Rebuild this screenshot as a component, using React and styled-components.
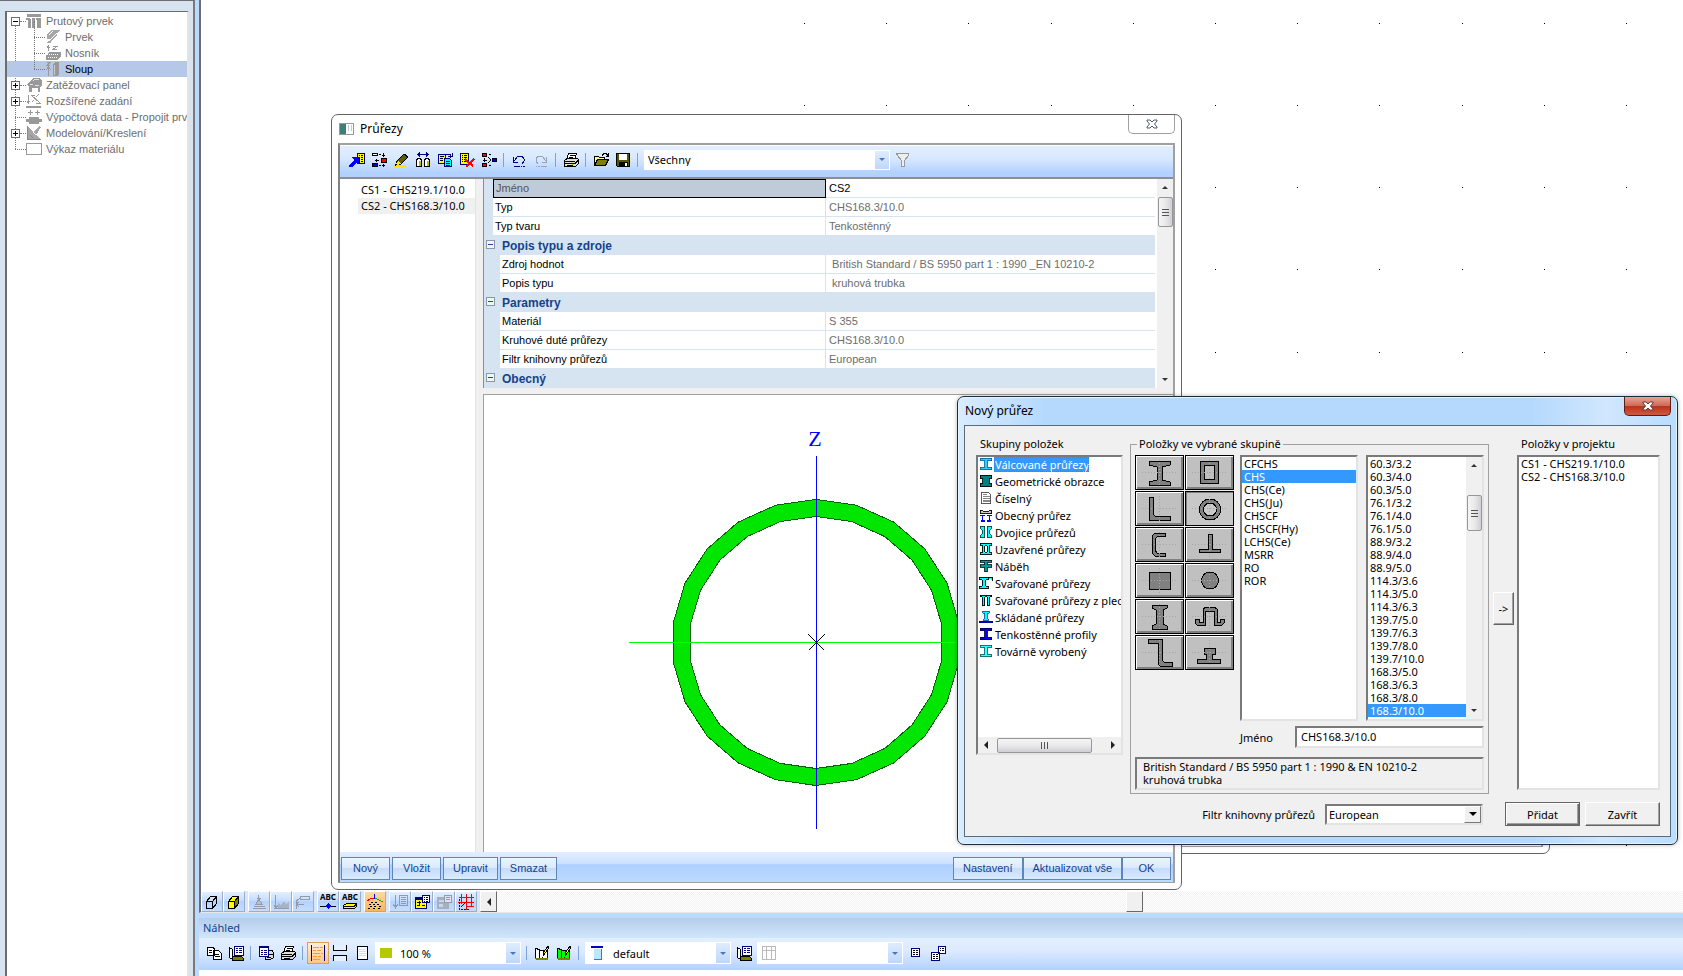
import React, { useState } from 'react'
import styled, { createGlobalStyle } from 'styled-components';

const uiFont = '"Noto Sans", "Open Sans", sans-serif';
const gridFont = '"Liberation Sans", Arial, sans-serif';

/* -------------------ICONS------------------------ */
const ICONS = {
  insert: <>
    <path d="M8.5 1.5h7v10h-7z" fill="#ff0" stroke="#000080" />
    <path d="M10 3.5h1m1 0h2M10 5.5h1m1 0h2M10 7.5h1m1 0h2M10 9.5h1m1 0h2" stroke="#000" />
    <path d="M3 5h7v7l-2-2-5 5H0v-2l5-5z" fill="#00f" />
    <path d="M10 5v7M5 10l-5 5" stroke="#000080" fill="none" />
  </>,
  split: <>
    <path d="M1.500 1.500h5v2h-5z" fill="#fff" stroke="#000" />
    <path d="M10 6h6v5h-6z" fill="#000" /><path d="M11 7h4v3h-4z" fill="#f00" />
    <path d="M1 11h6v4H1z" fill="#000" /><path d="M2 12h4v2H2z" fill="#00c" />
    <path d="M8 2.500h2M12.500 1v4M11 3.500h3M4 8.500h4M5.500 7v3M12.500 12v3M11 13.500h3M8 13.500h2" stroke="#000" fill="none" />
  </>,
  pencil: <>
    <path d="M2 13h11v2H1z" fill="#ffe600" />
    <path d="M11 2l4 3-7 7-5 1 1-4z" fill="#5c5c00" stroke="#000" />
    <path d="M5 9l3 3-4 1H2z" fill="#ffe600" /><path d="M1 13l2-2 1 2z" fill="#000" />
  </>,
  compare: <>
    <path d="M2 2.500h12M4.500 0v5M3.500 1v3M11.500 0v5M12.500 1v3" stroke="#000080" />
    <path d="M1.500 8.500l1-2h3l1 2v6h-5zM9.500 8.500l1-2h3l1 2v6h-5z" fill="#fff" stroke="#000" />
    <path d="M4 9h2v5H4zM12 9h2v5h-2z" fill="#bdbd00" />
  </>,
  copyDocs: <>
    <path d="M1.500 2.500h7v9h-7z" fill="#ff0" stroke="#000080" />
    <path d="M3 4.500h4M3 6.500h3M3 8.500h3" stroke="#000" />
    <path d="M7.500 6.500h5l2 2v6h-7z" fill="#0ff" stroke="#000080" />
    <path d="M9 9.500h4M9 11.500h4M9 13h4" stroke="#000080" />
    <path d="M9 2.500h4v3M11 4h4M15 1v4" stroke="#000080" fill="none" />
  </>,
  removeDoc: <>
    <path d="M1.500 1.500h8v11h-8z" fill="#ff0" stroke="#000080" />
    <path d="M3 3.500h1m1 0h3M3 5.500h1m1 0h3M3 7.500h1m1 0h3M3 9.500h1m1 0h3" stroke="#000" />
    <path d="M6 7l8 7M15 7l-8 8" stroke="#f00" strokeWidth="2" />
  </>,
  merge: <>
    <path d="M1 1h5v4H1zM1 11h5v4H1z" fill="#000" /><path d="M2 2h3v2H2zM2 12h3v2H2z" fill="#f00" />
    <path d="M11 6h5v4h-5z" fill="#000" /><path d="M12 7h3v2h-3z" fill="#00f" />
    <path d="M8 2.500h2M3.500 6v4M2 8.500h4M8 13.500h2M7 5l3 3-3 3" stroke="#000" fill="none" />
  </>,
  undo: <path d="M3 14.500h6m1 0h1m1 0h2M2 10.500h5M2.500 5v5M3 9l4-5h4l2 3v2l-2 3" stroke="#000080" fill="none" />,
  redo: <path d="M3 14.500h1m1 0h2m1 0h6M9 10.500h5M13.500 5v5M13 9L9 4H5L3 7v2l2 3" stroke="#9aa3b0" fill="none" />,
  print: <>
    <path d="M5.500 1.500h8l-2 6h-8z" fill="#fff" stroke="#000" />
    <path d="M7 3.500h5M6 5.500h4" stroke="#000" />
    <path d="M1.500 8.500l3-2h10l1 1v4l-3 3h-11z" fill="#ddd" stroke="#000" />
    <path d="M2 9.500h10M2 11.500h10l3-3M4 13.500h6" stroke="#000" fill="none" />
    <path d="M9 12h2v1H9z" fill="#cc0" />
  </>,
  open: <>
    <path d="M1.500 13.500v-9h4l1 1h5v3" fill="#ffff80" stroke="#000" />
    <path d="M1.500 13.500l3-6h11l-3 6z" fill="#808000" stroke="#000" />
    <path d="M9 3.500l2-2h2l2 2M15.500 1v3h-3" stroke="#000" fill="none" />
  </>,
  save: <>
    <path d="M1.500 1.500h13v13h-12l-1-1z" fill="#555500" stroke="#000" />
    <path d="M4 2h8v6H4z" fill="#fff" /><path d="M4 10h9v5H4z" fill="#000" /><path d="M10 11h2v3h-2z" fill="#fff" />
  </>,
  filter: <path d="M1.500 1.500h12v2l-4 5v6h-3v-6l-4-5z" stroke="#999" fill="#eee" />,
  box: <path d="M2.500 7.500h6v7h-6zM2.500 7.500l4-5h6v7l-4 5M8.500 7.500l4-5" stroke="#000" fill="none" />,
  boxYellow: <>
    <path d="M2.500 7.500l4-5h6v7l-4 5h-6z" fill="#ff0" stroke="#000" />
    <path d="M8 8l4-5v6l-4 5z" fill="#808000" /><path d="M2 7.500h6.500v7M8.500 7.500l4-5" stroke="#000" fill="none" />
  </>,
  support: <path d="M7.500 1v4M6 4h4M8 5l-3 5h6zM3 12.500h11M2 14.500h13" stroke="#919baa" fill="#b4bdca" />,
  loads: <>
    <path d="M2.500 1v13M1 11l2 3 2-3" stroke="#919baa" fill="none" />
    <path d="M5 14V9l3 2 3-4 2 3 3-3v7z" fill="#a9b3c1" /><path d="M1 14.500h15" stroke="#919baa" />
  </>,
  label: <path d="M5.500 2.500h9v3h-9zM5 4L1.500 7v8M1 10.500h8M4 8l-3 2 3 3" stroke="#919baa" fill="none" />,
  nodeAbc: <><path d="M0 12.500h16" stroke="#000" /><path d="M5 12l3-3 3 3-3 3z" fill="#00f" /></>,
  beamAbc: <><path d="M1.500 11.500l3-2h10v3l-2 2h-11z" fill="#ff0" stroke="#000" /><path d="M2 12.500h10l3-3" stroke="#000" fill="none" /></>,
  terrain: <>
    <path d="M1 10l7-5 7 5-7 5z" fill="#f7c877" />
    <path d="M2 10.500h2m2 0h2m2 0h2M4 8.500h2m2 0h2M3 12.500h2m2 0h2m3 0h2M1 14.500h2m3 0h2m3 0h2" stroke="#000" />
    <path d="M0 7l5-3 3 0" stroke="#f00" fill="none" /><path d="M8 4l8 4" stroke="#0b0" /><path d="M7.500 0v5" stroke="#00f" />
  </>,
  listDown: <path d="M3.500 1v12M1 10l2.500 4L6 10M7.500 1.500h8v10h-8zM9 3.500h5M9 5.500h5M9 7.500h5M9 9.500h5" stroke="#919baa" fill="none" />,
  cascade: <>
    <path d="M1 3h12v12H1z" fill="#000080" /><path d="M2 6h10v8H2z" fill="#ff0" />
    <path d="M3 8.500h4M5.500 7v5M3 11.500h3M8 11.500h3" stroke="#000" />
    <path d="M8.500 1.500h7v7h-7z" fill="#fff" stroke="#000080" />
    <path d="M10 3.500h1m1 0h2M10 5.500h1m1 0h2M10 7h1m1 0h2" stroke="#000" />
  </>,
  cascadeOff: <>
    <path d="M1 3h12v12H1z" fill="#a5afbd" /><path d="M3 6h8v2H3zM3 10h4v3H3z" fill="#c8d6e8" />
    <path d="M8.500 1.500h7v7h-7z" fill="#dbe6f5" stroke="#919baa" /><path d="M10 3.500h4M10 5.500h4" stroke="#919baa" />
  </>,
  gridRed: <>
    <path d="M1 3.500h15M0 8.500h16M3.500 0v10M8.500 0v16M13.500 0v13M8 12.500h8" stroke="#f00" />
    <path d="M1 15l8-8M1 5v10h11" stroke="#00f" strokeDasharray="2 1" fill="none" />
  </>,
  copy: <path d="M1.500 2.500h6l1 2v6h-7zM7.500 5.500h5l3 3v6h-8zM3 5.500h3M3 7.500h3M9 9.500h4M9 11.500h5" stroke="#000" fill="#fff" />,
  book: <>
    <path d="M1.500 2.500l3 2v10l-3-2z" fill="#fff" stroke="#000" /><path d="M4.500 11.500h9l2 2v2h-11z" fill="#808000" stroke="#000" />
    <path d="M6.500 1.500h9v9h-9z" fill="#fff" stroke="#000080" />
    <path d="M8 3.500h2m1 0h3M8 5.500h2m1 0h3M8 7.500h2m1 0h3" stroke="#000080" />
  </>,
  printTable: <>
    <path d="M7.500 5.500h7l1 3v4l-3 2h-5z" fill="#ddd" stroke="#000" /><path d="M9 9.500h6M9 12h4" stroke="#000" />
    <path d="M1.500 1.500h9v10h-9z" fill="#fff" stroke="#000080" />
    <path d="M1 2.500h10M3 5.500h2m1 0h3M3 7.500h2m1 0h3M3 9.500h2m1 0h3" stroke="#000080" />
  </>,
  pageMargins: <>
    <path d="M1.500 0v16M14.500 0v16" stroke="#000080" />
    <path d="M3 2.500h6m1 0h3M3 5.500h3m1 0h4M3 8.500h7m1 0h2M3 11.500h4m1 0h3M3 14h7" stroke="#ff9a2e" />
  </>,
  pageSplit: <path d="M1.500 0v5.500h13V0M1.500 16v-5.500h13V16" stroke="#000" fill="#e6f1ff" />,
  page: <><path d="M3.500 1.500h10v13h-10z" fill="#fff" stroke="#000" /><path d="M5 4.500h7M5 6.500h7M5 8.500h7M5 10.500h7" stroke="#cfe0f5" /></>,
  bookEdit: <>
    <path d="M1.500 3.500l4 1v10l-4-1zM5.500 14.500V5.500h8v8z" fill="#fff" stroke="#000" />
    <path d="M1 13h13v2H2z" fill="#808000" /><path d="M14 1l-5 7v3l6-8z" fill="#ff0" stroke="#000" />
  </>,
  bookEditGreen: <>
    <path d="M1.500 3.500l4 1v10l-4-1zM5.500 14.500V5.500h8v8z" fill="#0f0" stroke="#000" />
    <path d="M1 13h13v2H2z" fill="#808000" /><path d="M14 1l-5 7v3l6-8z" fill="#ff0" stroke="#000" />
  </>,
  column: <><path d="M2 1h12v2H2z" fill="#00c" /><path d="M5 4h8v11H5z" fill="#bfe6ff" /><path d="M12.500 4v11M5 14.500h8" stroke="#08f" /></>,
  table: <path d="M1.500 1.500h13v13h-13zM1 5.500h14M5.500 2v13M10.500 2v13" stroke="#bbb" fill="none" />,
  sheet: <><path d="M3.500 3.500h8v8h-8z" fill="#fff" stroke="#000080" /><path d="M5 5.500h2m1 0h2M5 7.500h2m1 0h2M5 9.500h2m1 0h2" stroke="#000" /></>,
  sheets: <>
    <path d="M8.500 1.500h7v7h-7zM1.500 7.500h8v8h-8z" fill="#fff" stroke="#000080" />
    <path d="M10 3.500h1m1 0h2M10 5.500h1m1 0h2M3 9.500h2m1 0h2M3 11.500h2m1 0h2M3 13.500h2m1 0h2" stroke="#000" />
  </>,
  // tree
  frame: <path d="M1 1h14v3H1zM0 5h4v2H0zM2 6h3v9H2zM6 6h3v9H6zM11 6h4v9h-4zM6 5h3v2H6zM10 5h5v2h-5z" fill="#999" />,
  member: <><path d="M2 5l4-4h9l-3 3v3l-7 7H2l3-4H2z" fill="#a6a6a6" /><path d="M4 12l8-8M6 13l8-8M4 6l4-4" stroke="#fff" /></>,
  beam: <><path d="M1 10l3-3h12v4l-3 4H1z" fill="#999" /><path d="M2 9.500h11M3 12.500h10" stroke="#fff" strokeDasharray="1 1" /><path d="M3.500 1v5M2 3l1.500-2L5 3M8 1.500h4l-4 3h4" stroke="#999" fill="none" /></>,
  post: <><path d="M8 3l2-2h4v12l-2 2H8z" fill="#999" /><path d="M9.500 4v10" stroke="#ccc" /><path d="M3.500 7v8M1 9l2.500-3L6 9M2 1.500h3l-3 3h3" stroke="#999" fill="none" /></>,
  panel: <><path d="M0 8l5-4 2-3h7l2 3v4l-2 3v4h-2v-4H6v4H3V9z" fill="#999" /><path d="M7 4l2-2h4M9 8h4M4 7h3" stroke="#e5e5e5" fill="none" /></>,
  extended: <path d="M2.500 2v8M1 8l1.500 2L4 8M5 2l9 8M6 9l2-2M10 4l3-3M6 2h3M10 10h5M0 13.500h15M0 14.500h15" stroke="#999" fill="none" />,
  calc: <><path d="M0 10h16v3H0zM3 8h10v7H3z" fill="#999" /><path d="M4.500 1v5M2 3.500h5M11.500 1v5M9 3.500h5" stroke="#999" /></>,
  modelling: <><path d="M2 2v12h12zM7 8l6-7 2 1-5 8z" fill="#a6a6a6" /><path d="M1.500 1v13M1 14.500h14M4 10l3 3" stroke="#888" /></>,
  sheetOff: <path d="M.5 2.500h15v11H.5z" stroke="#999" fill="#fff" />,
  window: <><path d="M.5 2.500h14v11H.5z" fill="#fff" stroke="#999" /><path d="M1 3h6v10H1z" fill="#3c8077" /><path d="M9 4h1v6H9zM12 4h1v6h-1z" fill="#b5cde5" /></>,
  // section groups
  rolled: <path d="M1.500 1.500h13v3h-5v7h5v3h-13v-3h5v-7h-5z" fill="#3cf" stroke="#0a6a9a" />,
  geometric: <path d="M1.500 1.500h13v4h-3v5h3v4h-13v-4h3v-5h-3z" fill="#008080" stroke="#000" />,
  numeric: <><path d="M2.500 1.500h8l3 3v10h-11z" fill="#fff" stroke="#444" /><path d="M4 4.500h5M4 6.500h8M4 8.500h8M4 10.500h8M4 12.500h8" stroke="#777" /></>,
  general: <><path d="M1.500 2.500h2l2 2h5l2-2h2v4h-13z" fill="#ccc" stroke="#000" /><path d="M1 8.500h6M9 8.500h6M4 9v5M12 9v5M2 14.500h5M9 14.500h5" stroke="#00f" strokeWidth="2" /></>,
  pair: <path d="M1.500 1.500h5v13h-5v-2l2-2v-5l-2-2zM14.500 1.500h-5v13h5v-2l-2-2v-5l2-2z" fill="#0ff" stroke="#044" />,
  closed: <path d="M1.500 1.500h13v2h-2v9h2v2h-13v-2h2v-9h-2zM6.500 4.500v7h3v-7z" fillRule="evenodd" fill="#0ff" stroke="#000" />,
  haunch: <path d="M1.500 1.500h13v2h-5v3h5v3h-5v5h-3v-5h-5v-3h5v-3h-5z" fill="#009999" stroke="#022" />,
  welded: <path d="M.5 1.500h10v3h-3v7h3v3H.5v-3h3v-7h-3zM10 1.500h5.500v4" fill="#0ff" stroke="#000" />,
  plates: <path d="M1.500 2.500h13v2h-2v10h-3v-10h-3v10h-3v-10h-2z" fill="#0ff" stroke="#000" />,
  built: <><path d="M4.500 1.500h7v2h-2v6l2 2h-7l2-2v-6h-2z" fill="#0ff" stroke="#0057a8" /><path d="M0 13h16v2H0z" fill="#0000a0" /></>,
  thin: <path d="M1.500 1.500h13v3h-5v7h5v3h-13v-3h5v-7h-5z" fill="#00f" stroke="#000050" />,
  factory: <path d="M1.500 1.500h13v2l-5 1v7l5 1v2h-13v-2l5-1v-7l-5-1z" fill="#3ff" stroke="#066" />,
};

const Icon = ({ name, size = 16 }) => (
  <IconSvg width={size} height={size} viewBox="0 0 16 16" aria-hidden="true">{ICONS[name]}</IconSvg>
);

const SHAPES = [
  ['I', <path d="M14 6h21v4l-8 2v13l8 2v3H14v-3l8-2V12l-8-2z" />],
  ['Obdelnik', <path fillRule="evenodd" d="M15 6h18v22H15zM19 10v14h10V10z" />],
  ['L', <path d="M14 6h4v17l2 2h15v4H14z" />],
  ['Kruh', <path fillRule="evenodd" d="M25 8a10.500 10.500 0 1 0 .01 0zM25 12a6.500 6.500 0 1 1-.01 0z" />],
  ['U', <path d="M30 6v3h-7l-3 3v11l2 3h8v3H20l-3-3V9l3-3z" />],
  ['T', <path d="M23 7h4v15h8v3H14v-3h9z" />],
  ['Deska', <path d="M14 9h21v17H14z" />],
  ['Tyc', <path d="M25 9a8.500 8.500 0 1 0 .01 0z" />],
  ['I2', <path d="M17 6h15v3l-4 2v14l4 2v3H17v-3l4-2V11l-4-2z" />],
  ['Omega', <path d="M10 20h4v3h4V10l3-2h8l3 2v13h3v-3h4v4l-2 2h-8V12h-9v14h-8l-2-2z" />],
  ['Z', <path d="M13 4h14v21l2 2h8v4H25l-2-3V8H13z" />],
  ['Kolejnice', <path d="M19 13h11v6h-3v5h8v4H12v-4h9v-5h-2z" />],
];

const TREE = [
  { text: 'Prutový prvek', icon: 'frame', sign: '-' },
  { text: 'Prvek', icon: 'member', child: true },
  { text: 'Nosník', icon: 'beam', child: true },
  { text: 'Sloup', icon: 'post', child: true, active: true },
  { text: 'Zatěžovací panel', icon: 'panel', sign: '+' },
  { text: 'Rozšířené zadání', icon: 'extended', sign: '+' },
  { text: 'Výpočtová data - Propojit prv', icon: 'calc' },
  { text: 'Modelování/Kreslení', icon: 'modelling', sign: '+' },
  { text: 'Výkaz materiálu', icon: 'sheetOff' },
];

const GROUPS = [
  ['Válcované průřezy', 'rolled'], ['Geometrické obrazce', 'geometric'], ['Číselný', 'numeric'],
  ['Obecný průřez', 'general'], ['Dvojice průřezů', 'pair'], ['Uzavřené průřezy', 'closed'],
  ['Náběh', 'haunch'], ['Svařované průřezy', 'welded'], ['Svařované průřezy z plec', 'plates'],
  ['Skládané průřezy', 'built'], ['Tenkostěnné profily', 'thin'], ['Továrně vyrobený', 'factory'],
];

const PROFILES = ['CFCHS', 'CHS', 'CHS(Ce)', 'CHS(Ju)', 'CHSCF', 'CHSCF(Hy)', 'LCHS(Ce)', 'MSRR', 'RO', 'ROR'];
const SIZES = ['60.3/3.2', '60.3/4.0', '60.3/5.0', '76.1/3.2', '76.1/4.0', '76.1/5.0', '88.9/3.2', '88.9/4.0', '88.9/5.0',
  '114.3/3.6', '114.3/5.0', '114.3/6.3', '139.7/5.0', '139.7/6.3', '139.7/8.0', '139.7/10.0', '168.3/5.0', '168.3/6.3', '168.3/8.0', '168.3/10.0'];
const PROJECT = ['CS1 - CHS219.1/10.0', 'CS2 - CHS168.3/10.0'];

const PROPS = [
  { name: 'Jméno', value: 'CS2', top: true, active: true },
  { name: 'Typ', value: 'CHS168.3/10.0', top: true },
  { name: 'Typ tvaru', value: 'Tenkostěnný', top: true },
  { group: 'Popis typu a zdroje' },
  { name: 'Zdroj hodnot', value: ' British Standard / BS 5950 part 1 : 1990 _EN 10210-2' },
  { name: 'Popis typu', value: ' kruhová trubka' },
  { group: 'Parametry' },
  { name: 'Materiál', value: 'S 355' },
  { name: 'Kruhové duté průřezy', value: 'CHS168.3/10.0' },
  { name: 'Filtr knihovny průřezů', value: 'European' },
  { group: 'Obecný' },
];

const MAIN_TOOLS = ['insert', 'split', 'pencil', 'compare', 'copyDocs', 'removeDoc', 'merge', '|', 'undo', 'redo', '|', 'print', '|', 'open', 'save', '|'];
const VIEW_TOOLS = [['box', 'boxYellow'], ['support', 'loads', 'label'], ['nodeAbc', 'beamAbc'], ['terrain'], ['listDown', 'cascade', 'cascadeOff', 'gridRed']];

// 22-sided ring, a little wider than tall
const ring = (rx, ry) => Array.from({ length: 22 }, (_, i) => {
  const a = (i * 2 * Math.PI) / 22;
  return `${(332 + rx * Math.sin(a)).toFixed(1)} ${(247.5 - ry * Math.cos(a)).toFixed(1)}`;
}).join('L');

const Tools = ({ items }) => items.map((name, i) => (
  name === '|' ? <Separator key={i} /> : <ToolButton key={i} aria-label={name}><Icon name={name} /></ToolButton>
));

const ListBox = ({ items, label, selected, onSelect }) => (
  <Items role="listbox" aria-label={label}>
    {items.map((item) => (
      <Item key={item} role="option" aria-selected={item === selected} $active={item === selected} onClick={() => onSelect && onSelect(item)}>{item}</Item>
    ))}
  </Items>
);

const ScrollBar = ({ before, thumb }) => (
  <Scroll>
    <Arrow $dir="up" />
    <Thumb style={{ marginTop: before, height: thumb }}><i /><i /><i /></Thumb>
    <Arrow $dir="down" $last />
  </Scroll>
);

const CloseGlyph = ({ dark }) => (
  <svg width="12" height="10" viewBox="0 0 12 10" aria-hidden="true">
    <path d="M1 1h3l2 2 2-2h3v1L8.500 5 11 8v1H8L6 7 4 9H1V8l2.500-3L1 2z" fill="#fff" stroke={dark ? '#555a70' : '#5c3a3a'} />
  </svg>
);

/* -------------------SIDEBAR------------------------ */
const Sidebar = () => (
  <Aside>
    <Tree>
      {TREE.map(({ text, icon, sign, child, active }) => (
        <TreeRow key={text} $child={child} $active={active}>
          {sign && <Toggle aria-label={text} $plus={sign === '+'} />}
          {!sign && !child && <NoToggle />}
          <Dash $long={!sign} />
          <Icon name={icon} />
          <span>{text}</span>
        </TreeRow>
      ))}
    </Tree>
  </Aside>
);

/* -------------------PRUREZY------------------------ */
const SectionsWindow = () => (
  <Window $x={130} $y={114} $w={851} $h={776}>
    <WindowTitle>
      <Icon name="window" />
      <h2>Průřezy</h2>
      <CloseFlat aria-label="Zavřít okno"><CloseGlyph dark /></CloseFlat>
    </WindowTitle>
    <WindowClient>
      <Toolbar>
        <Tools items={MAIN_TOOLS} />
        <Combo $w={246} $h={20}>
          <select aria-label="Filtr"><option>Všechny</option></select>
          <ComboArrow />
        </Combo>
        <ToolButton aria-label="filter"><Icon name="filter" /></ToolButton>
      </Toolbar>
      <WindowBody>
        <SectionList>
          {PROJECT.map((item, i) => <SectionItem key={item} $active={i === 1}>{item}</SectionItem>)}
        </SectionList>
        <Detail>
          <GridWrap>
            <PropTable>
              <colgroup><col style={{ width: 9 }} /><col style={{ width: 7 }} /><col style={{ width: 326 }} /><col /></colgroup>
              <tbody>
                {PROPS.map((p) => (
                  p.group ? (
                    <tr key={p.group}>
                      <Gutter colSpan={2}><GroupToggle aria-label={p.group} /></Gutter>
                      <GroupName colSpan={2}>{p.group}</GroupName>
                    </tr>
                  ) : (
                    <tr key={p.name}>
                      <Gutter colSpan={p.top ? 1 : 2} />
                      <PropName colSpan={p.top ? 2 : 1} $active={p.active}>{p.name}</PropName>
                      <PropValue $active={p.active}>{p.value}</PropValue>
                    </tr>
                  )
                ))}
              </tbody>
            </PropTable>
            <ScrollBar before={8} thumb={30} />
          </GridWrap>
          <Preview>
            <svg width="100%" height="100%" aria-label="CHS168.3/10.0">
              <path d={`M${ring(144, 143)}ZM${ring(127, 126)}Z`} fillRule="evenodd" fill="#00e600" stroke="#006400" />
              <path d="M145 247.5H690" stroke="#00ff00" />
              <path d="M332.500 61v373" stroke="#0000ff" />
              <path d="M324.500 239.500l16 16M340.500 239.500l-16 16" stroke="#000" />
              <text x="331" y="51" textAnchor="middle" fontFamily="Liberation Serif, serif" fontSize="22" fill="#0000ff">Z</text>
            </svg>
          </Preview>
        </Detail>
      </WindowBody>
      <Footer>
        <div>
          {['Nový', 'Vložit', 'Upravit', 'Smazat'].map((t) => <BlueButton key={t}>{t}</BlueButton>)}
        </div>
        <div>
          {['Nastavení', 'Aktualizovat vše', 'OK'].map((t) => <BlueButton key={t} $joined>{t}</BlueButton>)}
        </div>
      </Footer>
    </WindowClient>
  </Window>
);

/* -------------------NOVY PRUREZ------------------------ */
const NewSectionDialog = () => {
  const [group, setGroup] = useState('Válcované průřezy');
  const [shape, setShape] = useState('Kruh');
  const [profile, setProfile] = useState('CHS');
  const [size, setSize] = useState('168.3/10.0');
  const [name, setName] = useState('CHS168.3/10.0');

  return (
    <Dialog>
      <DialogTitle>
        <h2>Nový průřez</h2>
        <CloseRed aria-label="Zavřít dialog"><CloseGlyph /></CloseRed>
      </DialogTitle>
      <DialogClient>
        <Columns>
          <div>
            <Caption>Skupiny položek</Caption>
            <Sunken $h={300}>
              <GroupList>
                {GROUPS.map(([text, icon]) => (
                  <GroupItem key={text} $active={text === group} onClick={() => setGroup(text)}>
                    <Icon name={icon} size={14} /><span>{text}</span>
                  </GroupItem>
                ))}
              </GroupList>
              <HScroll>
                <Arrow $dir="left" />
                <HThumb><i /><i /><i /></HThumb>
                <Arrow $dir="right" $last />
              </HScroll>
            </Sunken>
          </div>
          <Fieldset>
            <legend>Položky ve vybrané skupině</legend>
            <Picker>
              <ShapeGrid>
                {SHAPES.map(([id, drawing]) => (
                  <ShapeButton key={id} aria-label={id} $pressed={id === shape} onClick={() => setShape(id)}>
                    <svg width="49" height="35" viewBox="0 0 49 35" aria-hidden="true">
                      <g fill="#808080" stroke="#000">{drawing}</g>
                      <path d="M7 17.500h36M24.500 5v26" stroke="#a6a6a6" strokeDasharray="1 2" />
                    </svg>
                  </ShapeButton>
                ))}
              </ShapeGrid>
              <Lists>
                <Sunken $h={266}><ListBox label="Profily" items={PROFILES} selected={profile} onSelect={setProfile} /></Sunken>
                <Sunken $h={266} $row>
                  <ListBox label="Rozměry" items={SIZES} selected={size} onSelect={setSize} />
                  <ScrollBar before={28} thumb={36} />
                </Sunken>
                <NameRow>
                  <label htmlFor="jmeno">Jméno</label>
                  <NameInput id="jmeno" value={name} onChange={(e) => setName(e.target.value)} />
                </NameRow>
              </Lists>
            </Picker>
            <Description>British Standard / BS 5950 part 1 : 1990 &amp; EN 10210-2<br />kruhová trubka</Description>
          </Fieldset>
          <MoveButton>-&gt;</MoveButton>
          <div>
            <Caption>Položky v projektu</Caption>
            <Sunken $h={335}><ListBox label="Položky v projektu" items={PROJECT} /></Sunken>
          </div>
        </Columns>
        <DialogFooter>
          <label htmlFor="knihovna">Filtr knihovny průřezů</label>
          <ClassicCombo>
            <select id="knihovna"><option>European</option></select>
            <span />
          </ClassicCombo>
          <ClassicButton $main>Přidat</ClassicButton>
          <ClassicButton>Zavřít</ClassicButton>
        </DialogFooter>
      </DialogClient>
    </Dialog>
  );
}

const App = () => {
  const dots = [];
  for (let i = 0; i < 11; i++) {
    for (let j = 0; j < 11; j++) {
      dots.push([Math.round(603 + i * 82.2), Math.round(22.8 + j * 82.2)]);
    }
  }

  return (
    <Page>
      <GlobalStyle />
      <Sidebar />
      <Main>
        <Canvas>
          <svg width="100%" height="100%" aria-hidden="true">
            {dots.map(([x, y]) => <rect key={`${x}-${y}`} x={x} y={y} width="1" height="1" />)}
          </svg>
          <Window $x={900} $y={500} $w={449} $h={354}><WindowClient /></Window>
          <SectionsWindow />
          <NewSectionDialog />
        </Canvas>
        <ViewBar>
          {VIEW_TOOLS.map((set, i) => (
            <ViewGroup key={i}>
              {set.map((name) => (
                <ViewButton key={name} aria-label={name} $active={name === 'terrain'}>
                  {name.endsWith('Abc') && <em>ABC</em>}
                  <Icon name={name} />
                </ViewButton>
              ))}
            </ViewGroup>
          ))}
          <ScrollButton aria-label="Vlevo"><Arrow $dir="left" /></ScrollButton>
          <HTrack><HTrackThumb /></HTrack>
        </ViewBar>
        <PaneTitle>Náhled</PaneTitle>
        <PaneToolbar>
          <Tools items={['copy', 'book', '|', 'printTable', 'print', '|']} />
          <ToolButton aria-label="okraje" $active><Icon name="pageMargins" /></ToolButton>
          <Tools items={['pageSplit', 'page']} />
          <Combo $w={146} $h={22}>
            <Swatch />
            <select aria-label="Měřítko"><option>100 %</option></select>
            <ComboArrow />
          </Combo>
          <Tools items={['|', 'bookEdit', 'bookEditGreen', '|']} />
          <Combo $w={146} $h={22}>
            <Icon name="column" />
            <select aria-label="Styl"><option>default</option></select>
            <ComboArrow />
          </Combo>
          <Tools items={['book']} />
          <Combo $w={146} $h={22}>
            <Icon name="table" />
            <select aria-label="Tabulka" disabled><option></option></select>
            <ComboArrow />
          </Combo>
          <Tools items={['sheet', 'sheets']} />
        </PaneToolbar>
        <PaneBody />
      </Main>
    </Page>
  )
}

const GlobalStyle = createGlobalStyle`
  * { box-sizing: border-box; }
  body {
    margin: 0;
    font-family: ${uiFont};
    font-size: 11px;
    line-height: 13px;
    color: #000;
  }
  h2 { margin: 0; font-size: 12px; font-weight: 400; line-height: 16px; }
  ul { margin: 0; padding: 0; list-style: none; }
  button, input, select { font: inherit; color: inherit; padding: 0; margin: 0; border-radius: 0; }
  select { appearance: none; background: transparent; border: 0; outline: 0; opacity: 1; }
`;

const IconSvg = styled.svg`
  display: block;
  flex: none;
  shape-rendering: crispEdges;
`;

const Page = styled.div`
  display: flex;
  min-height: 100vh;
  overflow: hidden;
`;

const Aside = styled.aside`
  display: flex;
  flex: none;
  width: 195px;
  padding: 10px 4px 0 5px;
  background: #d6e4f2;
  border-top: 1px solid #6d6d6d;
  border-right: 2px solid #7a7a7a;
`;

const Tree = styled.ul`
  position: relative;
  flex: 1;
  min-width: 0;
  padding-top: 1px;
  background: #fff;
  border: 2px solid #e3e3e3;
  border-width: 1px 2px 0;
  border-top-color: #6d6d6d;
  border-left-color: #6d6d6d;
  overflow: hidden;
  color: #6d6d6d;
  font-family: ${gridFont};
  &::before {
    content: '';
    position: absolute;
    left: 8px;
    top: 13px;
    height: 124px;
    border-left: 1px dotted #777;
  }
`;

const TreeRow = styled.li`
  position: relative;
  display: flex;
  align-items: center;
  height: 16px;
  padding-left: ${props => props.$child ? '27px' : '4px'};
  background: ${props => props.$active ? '#b5c8e8' : 'transparent'};
  color: ${props => props.$active ? '#000' : 'inherit'};
  white-space: nowrap;
  span { margin-left: 4px; }
  ${props => props.$child && `
    &::before {
      content: '';
      position: absolute;
      left: 27px;
      top: -8px;
      height: 16px;
      border-left: 1px dotted #777;
    }
  `}
`;

const Toggle = styled.button`
  flex: none;
  position: relative;
  width: 9px;
  height: 9px;
  border: 1px solid #6d6d6d;
  background: #fff;
  &::before, &::after {
    content: '';
    position: absolute;
    left: 1px;
    top: 3px;
    width: 5px;
    height: 1px;
    background: #000;
  }
  &::after {
    left: 3px;
    top: 1px;
    width: ${props => props.$plus ? '1px' : '0'};
    height: 5px;
  }
`;

const NoToggle = styled.span`
  && { margin: 0; }
  flex: none;
  width: 4px;
`;

const Dash = styled.i`
  flex: none;
  width: ${props => props.$long ? '11px' : '6px'};
  border-top: 1px dotted #777;
`;

const Main = styled.main`
  display: flex;
  flex-direction: column;
  flex: 1;
  min-width: 0;
  padding-left: 4px;
  background: #bcd9ff;
`;

const Canvas = styled.section`
  position: relative;
  flex: 1;
  background: #fff;
  border-left: 2px solid #6d6d6d;
  > svg { position: absolute; left: 0; top: 0; shape-rendering: crispEdges; }
`;

const Window = styled.section`
  position: absolute;
  left: ${props => props.$x}px;
  top: ${props => props.$y}px;
  width: ${props => props.$w}px;
  height: ${props => props.$h}px;
  display: flex;
  flex-direction: column;
  padding: 0 6px 6px;
  background: #fff;
  border: 1px solid #646464;
  border-radius: 7px;
`;

const WindowTitle = styled.header`
  display: flex;
  align-items: center;
  gap: 5px;
  height: 28px;
  padding-left: 1px;
`;

const CloseFlat = styled.button`
  align-self: flex-start;
  display: flex;
  align-items: center;
  justify-content: center;
  width: 47px;
  height: 19px;
  margin-left: auto;
  background: #fff;
  border: 1px solid #a0a0a0;
  border-top: 0;
  border-radius: 0 0 5px 5px;
`;

const WindowClient = styled.div`
  display: flex;
  flex-direction: column;
  flex: 1;
  min-height: 0;
  border: 2px solid #a0a0a0;
  border-left-color: #828282;
  border-bottom-width: 1px;
`;

const Toolbar = styled.div`
  display: flex;
  align-items: center;
  height: 34px;
  padding: 0 0 4px 6px;
  background: linear-gradient(#e3efff, #d8e8ff 40%, #b3d2ff 85%, #b0d0ff);
  border-top: 1px solid #fff;
  border-bottom: 2px solid #8a8f96;
`;

const ToolButton = styled.button`
  display: flex;
  align-items: center;
  justify-content: center;
  width: 22px;
  height: 22px;
  background: ${props => props.$active ? 'linear-gradient(#fff0d6, #ffc587)' : 'none'};
  border: ${props => props.$active ? '1px solid #d9a05b' : '0'};
`;

const Separator = styled.span`
  width: 1px;
  height: 14px;
  margin: 0 4px 0 3px;
  background: #7fa3d6;
`;

const Combo = styled.span`
  display: flex;
  align-items: center;
  width: ${props => props.$w}px;
  height: ${props => props.$h}px;
  margin: 0 2px;
  padding: 1px 1px 1px 4px;
  background: #fff;
  select { flex: 1; min-width: 0; height: 100%; }
  svg, b { flex: none; margin-right: 8px; }
`;

const Swatch = styled.b`
  width: 12px;
  height: 10px;
  margin-left: 1px;
  background: #b5c900;
`;

const ComboArrow = styled.i`
  display: flex;
  align-items: center;
  justify-content: center;
  align-self: stretch;
  width: 14px;
  background: linear-gradient(#dfecff, #bdd7fb);
  pointer-events: none;
  &::after {
    content: '';
    border: 3px solid transparent;
    border-top-color: #4a76b8;
    border-bottom: 0;
  }
`;

const WindowBody = styled.div`
  display: flex;
  flex: 1;
  min-height: 0;
  background: #f0f0f0;
`;

const SectionList = styled.ul`
  width: 136px;
  padding: 3px 0 0 18px;
  background: #fff;
  border-right: 1px solid #e3e3e3;
`;

const SectionItem = styled.li`
  height: 16px;
  padding-left: 3px;
  line-height: 16px;
  background: ${props => props.$active ? '#f0f0f0' : '#fff'};
  white-space: nowrap;
`;

const Detail = styled.div`
  display: flex;
  flex-direction: column;
  gap: 6px;
  flex: 1;
  min-width: 0;
  margin-left: 7px;
`;

const GridWrap = styled.div`
  display: flex;
  gap: 2px;
  background: #fff;
  border-left: 1px solid #8a8f96;
`;

const PropTable = styled.table`
  flex: 1;
  table-layout: fixed;
  border-spacing: 0;
  font-family: ${gridFont};
  td, th { height: 19px; padding: 0; }
`;

const Gutter = styled.td`
  background: #d6e4f2;
`;

const GroupToggle = styled.button`
  display: flex;
  align-items: center;
  width: 9px;
  height: 9px;
  margin: 0 0 2px 2px;
  border: 1px solid #8b98a8;
  background: #f4f4f4;
  &::after {
    content: '';
    width: 5px;
    height: 1px;
    margin-left: 1px;
    background: #1c4a9c;
  }
`;

const GroupName = styled.th`
  && { padding: 2px 0 0 2px; }
  text-align: left;
  font-size: 12px;
  color: #15428b;
  background: #d6e4f2;
`;

const PropName = styled.th`
  && { padding-left: 2px; }
  text-align: left;
  font-weight: 400;
  color: ${props => props.$active ? '#555' : '#000'};
  background: ${props => props.$active ? '#bfcbd9' : '#fff'};
  border: ${props => props.$active ? '1px solid #000' : '1px solid #d6e4f2'};
  ${props => !props.$active && 'border-width: 0 1px 1px 0;'}
`;

const PropValue = styled.td`
  && { padding-left: 3px; }
  color: ${props => props.$active ? '#000' : '#6d6d6d'};
  background: #fff;
  border-bottom: 1px solid #d6e4f2;
  white-space: pre;
`;

const Scroll = styled.div`
  display: flex;
  flex-direction: column;
  align-items: center;
  flex: none;
  width: 16px;
  padding: 7px 0;
  background: #f0f0f0;
`;

const Arrow = styled.i`
  border: 3px solid transparent;
  ${props => props.$dir === 'up' && 'border-top: 0; border-bottom-color: #333;'}
  ${props => props.$dir === 'down' && 'border-bottom: 0; border-top-color: #333;'}
  ${props => props.$dir === 'left' && 'border-left: 0; border-width: 4px 4px 4px 0; border-right-color: #222;'}
  ${props => props.$dir === 'right' && 'border-right: 0; border-width: 4px 0 4px 4px; border-left-color: #222;'}
  ${props => props.$last && (props.$dir === 'down' ? 'margin-top: auto;' : 'margin-left: auto;')}
`;

const Thumb = styled.span`
  display: flex;
  flex-direction: column;
  align-items: center;
  justify-content: center;
  gap: 2px;
  width: 15px;
  background: linear-gradient(90deg, #f5f5f5, #e9e9eb 50%, #cfd0d4);
  border: 1px solid #979797;
  border-radius: 2px;
  i { width: 7px; height: 1px; background: #555; }
`;

const HScroll = styled.div`
  display: flex;
  align-items: center;
  height: 16px;
  margin-top: auto;
  padding: 0 6px;
  background: #f0f0f0;
`;

const HThumb = styled.span`
  display: flex;
  align-items: center;
  justify-content: center;
  gap: 2px;
  width: 95px;
  height: 15px;
  margin-left: 9px;
  background: linear-gradient(#f5f5f5, #e9e9eb 50%, #cfd0d4);
  border: 1px solid #979797;
  border-radius: 2px;
  i { width: 1px; height: 7px; background: #555; }
`;

const Preview = styled.div`
  flex: 1;
  min-height: 0;
  background: #fff;
  border: 1px solid #a0a0a0;
  border-width: 1px 0 0 1px;
  svg { display: block; shape-rendering: crispEdges; }
`;

const Footer = styled.footer`
  display: flex;
  justify-content: space-between;
  align-items: center;
  height: 30px;
  padding: 3px 2px 0 1px;
  background: linear-gradient(#e3efff, #cbe0ff 40%, #aed0ff 42%, #bddaff);
  font-family: ${gridFont};
  div { display: flex; gap: 2px; }
`;

const BlueButton = styled.button`
  min-width: 49px;
  height: 23px;
  padding: 0 9px;
  margin-right: ${props => props.$joined ? '-2px' : '0'};
  color: #15428b;
  background: linear-gradient(#edf5ff, #dceafd 45%, #c4dcfa 50%, #dcebff);
  border: 1px solid #5f86ba;
  &:last-child { margin-right: 0; }
`;

const Dialog = styled.section`
  position: absolute;
  left: 756px;
  top: 396px;
  width: 721px;
  padding: 0 6px 7px;
  background: linear-gradient(90deg, #d9ecff, #b5d9fd 12%, #b5d9fd 80%, #d0e7fe 90%, #b9dcff);
  border: 1px solid #1c2c3c;
  border-radius: 7px;
  box-shadow: inset 0 0 0 1px #e3f3ff, 0 0 4px rgba(0, 0, 0, 0.3);
`;

const DialogTitle = styled.header`
  display: flex;
  align-items: center;
  height: 28px;
  padding-left: 1px;
`;

const CloseRed = styled(CloseFlat)`
  background: linear-gradient(#e6a596, #cf6a56 48%, #b9311a 50%, #d0593f);
  border-color: #5e1b14;
`;

const DialogClient = styled.div`
  padding: 10px 10px 10px 11px;
  background: #f0f0f0;
  border: 1px solid #5a6b7d;
`;

const Columns = styled.div`
  display: grid;
  grid-template-columns: 147px 1fr 21px 143px;
  column-gap: 3px;
  align-items: start;
`;

const Caption = styled.p`
  margin: 0;
  padding: 0 4px 3px;
  line-height: 16px;
`;

const Sunken = styled.div`
  display: flex;
  flex-direction: ${props => props.$row ? 'row' : 'column'};
  height: ${props => props.$h}px;
  min-width: 0;
  overflow: hidden;
  background: #fff;
  border: 2px solid;
  border-color: #7a7a7a #e3e3e3 #e3e3e3 #7a7a7a;
`;

const Items = styled.ul`
  flex: 1;
  min-width: 0;
`;

const Item = styled.li`
  height: 13px;
  padding-left: 2px;
  color: ${props => props.$active ? '#fff' : '#000'};
  background: ${props => props.$active ? '#3399ff' : 'none'};
  white-space: nowrap;
  cursor: default;
`;

const GroupList = styled.ul`
  overflow: hidden;
`;

const GroupItem = styled.li`
  display: flex;
  align-items: flex-start;
  gap: 1px;
  height: 17px;
  padding-left: 1px;
  white-space: nowrap;
  cursor: default;
  span {
    padding-left: 1px;
    line-height: 15px;
    color: ${props => props.$active ? '#fff' : '#000'};
    background: ${props => props.$active ? '#3399ff' : 'none'};
    outline: ${props => props.$active ? '1px dotted #cc6600' : '0'};
    outline-offset: -1px;
  }
`;

const Fieldset = styled.fieldset`
  min-width: 0;
  margin: 0 1px 0 4px;
  padding: 3px 4px 3px 4px;
  border: 1px solid #a0a0a0;
  legend { padding: 0 2px; margin-left: 2px; line-height: 16px; }
`;

const Picker = styled.div`
  display: flex;
  align-items: flex-start;
  gap: 6px;
`;

const ShapeGrid = styled.div`
  display: grid;
  grid-template-columns: 49px 49px;
  gap: 1px;
`;

const ShapeButton = styled.button`
  height: 35px;
  overflow: hidden;
  background: ${props => props.$pressed ? '#c8c8c8' : '#c0c0c0'};
  border: 1px solid #000;
  box-shadow: ${props => props.$pressed ? 'inset 1px 1px 0 #808080' : 'inset 1px 1px 0 #fff, inset -2px -2px 0 #808080'};
  svg { display: block; margin: -1px; shape-rendering: crispEdges; }
`;

const Lists = styled.div`
  display: grid;
  grid-template-columns: 1fr 1fr;
  gap: 5px 8px;
  flex: 1;
  min-width: 0;
`;

const NameRow = styled.div`
  grid-column: 1 / 3;
  display: flex;
  align-items: center;
  justify-content: space-between;
`;

const NameInput = styled.input`
  width: 189px;
  height: 22px;
  padding: 0 4px 2px;
  background: #fff;
  border: 2px solid;
  border-color: #7a7a7a #e3e3e3 #e3e3e3 #7a7a7a;
`;

const Description = styled.p`
  height: 33px;
  margin: 9px 0 0;
  padding: 1px 6px;
  border: 2px solid;
  border-color: #7a7a7a #e3e3e3 #e3e3e3 #7a7a7a;
  white-space: nowrap;
`;

const ClassicButton = styled.button`
  width: 75px;
  height: 24px;
  background: #f0f0f0;
  border: 1px solid;
  border-color: ${props => props.$main ? '#646464' : '#fff #646464 #646464 #fff'};
  box-shadow: ${props => props.$main ? 'inset 1px 1px 0 #fff, inset -1px -1px 0 #696969, inset -2px -2px 0 #a0a0a0' : 'inset -1px -1px 0 #a0a0a0'};
`;

const MoveButton = styled(ClassicButton)`
  width: 21px;
  height: 33px;
  margin-top: 156px;
`;

const DialogFooter = styled.div`
  display: flex;
  align-items: center;
  justify-content: flex-end;
  gap: 5px;
  margin-top: 8px;
  label { margin-right: 5px; }
`;

const ClassicCombo = styled.span`
  display: flex;
  width: 158px;
  height: 21px;
  margin-right: 17px;
  background: #fff;
  border: 2px solid;
  border-color: #7a7a7a #e3e3e3 #e3e3e3 #7a7a7a;
  select { flex: 1; padding-left: 2px; }
  span {
    display: flex;
    align-items: center;
    justify-content: center;
    width: 17px;
    background: #f0f0f0;
    border: 1px solid;
    border-color: #fff #7a7a7a #7a7a7a #fff;
    pointer-events: none;
  }
  span::after {
    content: '';
    border: 4px solid transparent;
    border-top-color: #000;
    border-bottom: 0;
  }
`;

const ViewBar = styled.div`
  display: flex;
  height: 22px;
  margin-bottom: 5px;
  background: #d7e6fb;
  border-left: 2px solid #6d6d6d;
  border-bottom: 1px solid #e8e8e8;
`;

const ViewGroup = styled.div`
  display: flex;
  margin-right: 3px;
  &:last-of-type { margin-right: 0; }
`;

const ViewButton = styled.button`
  display: flex;
  flex-direction: column;
  align-items: center;
  justify-content: center;
  position: relative;
  width: 22px;
  height: 21px;
  background: ${props => props.$active ? 'linear-gradient(#fdd9a5, #ffb45a)' : 'linear-gradient(#e3efff, #c6ddfc 45%, #b3d2ff 50%, #c6ddff)'};
  border: 1px solid;
  border-color: #fff #98aecb #98aecb #fff;
  em {
    position: absolute;
    top: 1px;
    font-size: 8px;
    font-weight: 700;
    font-style: normal;
    line-height: 8px;
  }
`;

const ScrollButton = styled.button`
  display: flex;
  align-items: center;
  justify-content: center;
  width: 17px;
  background: #f0f0f0;
  border: 1px solid;
  border-color: #fff #696969 #696969 #fff;
`;

const HTrack = styled.div`
  display: flex;
  flex: 1;
  background: repeating-conic-gradient(#f2f2f2 0 25%, #fff 0 50%) 0 0 / 2px 2px;
`;

const HTrackThumb = styled.span`
  width: 17px;
  margin-left: 629px;
  background: #f0f0f0;
  border: 1px solid;
  border-color: #fff #696969 #696969 #fff;
`;

const PaneTitle = styled.h2`
  && {
    height: 20px;
    padding-left: 4px;
    font-size: 11px;
    line-height: 20px;
  }
  color: #15428b;
  background: linear-gradient(#b5cdea, #cfe6fb);
`;

const PaneToolbar = styled(Toolbar)`
  height: 32px;
  padding: 0 0 2px 4px;
  border: 0;
  background: linear-gradient(#e3efff, #dceaff 40%, #b3d2ff);
`;

const PaneBody = styled.div`
  height: 6px;
  background: #fff;
`;

export default App
